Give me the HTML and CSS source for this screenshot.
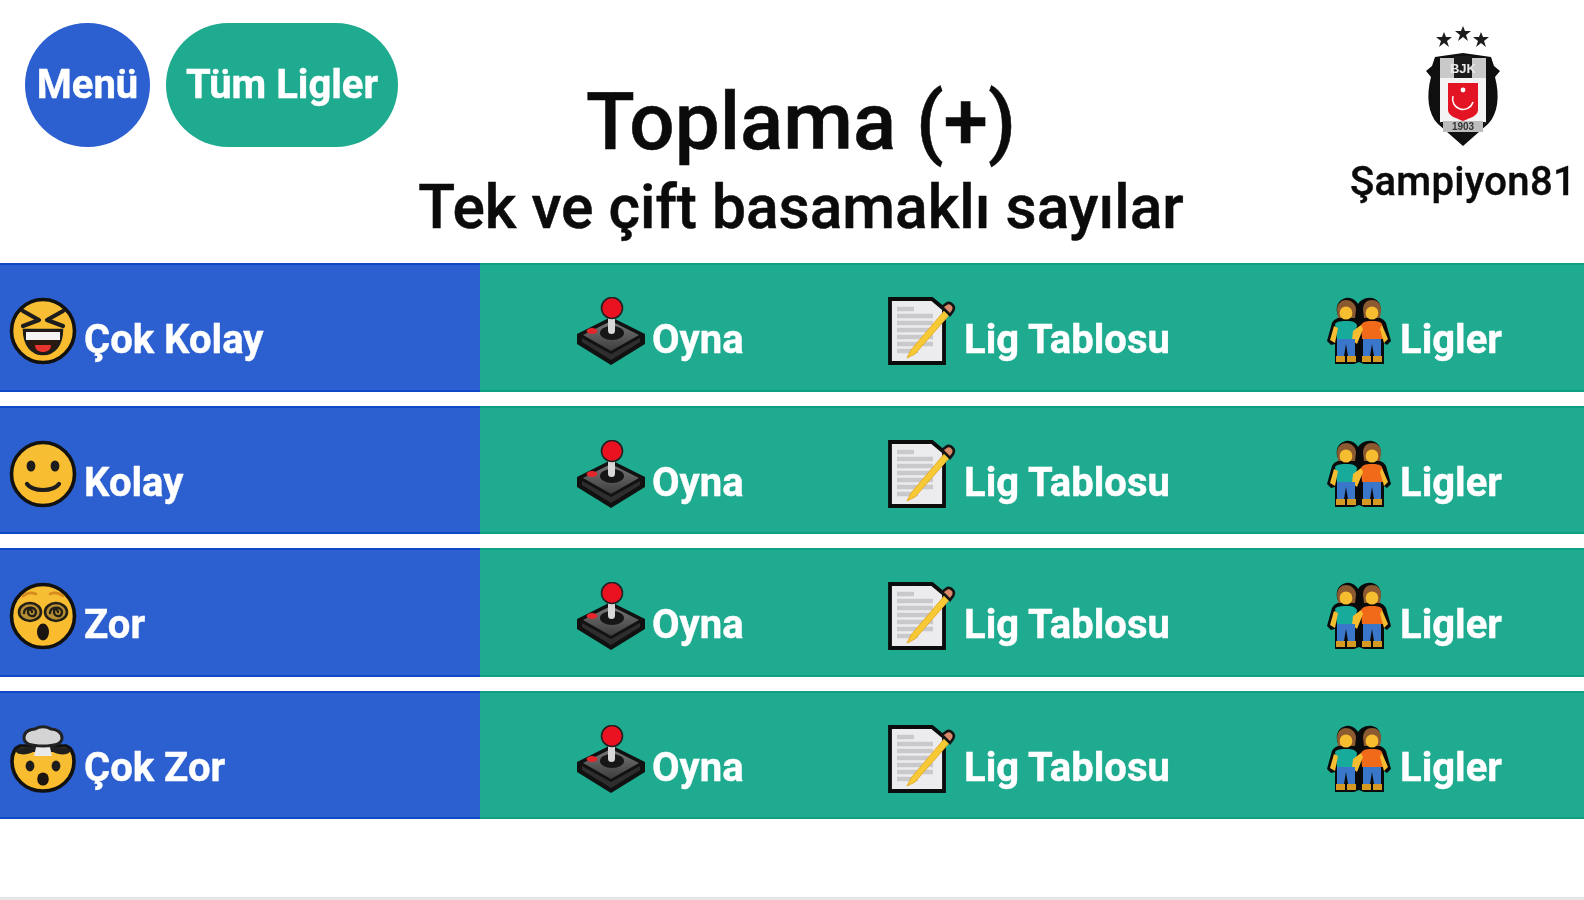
FILE: index.html
```html
<!DOCTYPE html>
<html lang="tr">
<head>
<meta charset="utf-8">
<title>Toplama (+)</title>
<link rel="stylesheet" href="styles.css">
</head>
<body>
<svg class="defs" aria-hidden="true">
  <defs>
    <linearGradient id="gface" x1="0" y1="0" x2="0" y2="1"><stop offset="0" stop-color="#f6bf36"/><stop offset="1" stop-color="#fbbb2c"/></linearGradient>
    <linearGradient id="gbase" x1="0" y1="0" x2="0" y2="1"><stop offset="0" stop-color="#777"/><stop offset="1" stop-color="#3d3d3d"/></linearGradient>
    <symbol id="i-laugh" viewBox="0 0 68 68">
      <circle cx="34" cy="34" r="31.5" fill="url(#gface)" stroke="#111" stroke-width="3.6"/>
      <path d="M14 14 30 23 14 29M54 14 38 23 54 29" fill="none" stroke="#1d1d1d" stroke-width="4.2" stroke-linecap="round" stroke-linejoin="round"/>
      <path d="M15 33H53C53 48 45 57 34 57S15 48 15 33Z" fill="#2a1a10" stroke="#1d1d1d" stroke-width="2.4"/>
      <path d="M17 35H51V43H17Z" fill="#f4f4f4"/>
      <path d="M26 48H42C42 53 38 55 34 55S26 53 26 48Z" fill="#e8352e"/>
    </symbol>
    <symbol id="i-smile" viewBox="0 0 68 68">
      <circle cx="34" cy="34" r="31.5" fill="url(#gface)" stroke="#111" stroke-width="3.6"/>
      <ellipse cx="22" cy="26" rx="4.4" ry="5.6" fill="#1d1d1d"/>
      <ellipse cx="46" cy="26" rx="4.4" ry="5.6" fill="#1d1d1d"/>
      <path d="M18 44C24 52 44 52 50 44" fill="none" stroke="#1d1d1d" stroke-width="4.2" stroke-linecap="round"/>
    </symbol>
    <symbol id="i-dizzy" viewBox="0 0 68 68">
      <circle cx="34" cy="34" r="31.5" fill="url(#gface)" stroke="#111" stroke-width="3.6"/>
      <path d="M14 14Q20 9 27 12M41 12Q48 9 54 14" fill="none" stroke="#d68b1e" stroke-width="2.6" stroke-linecap="round"/>
      <ellipse cx="21" cy="30" rx="11" ry="9" fill="#b58f34" stroke="#231f16" stroke-width="2.6"/>
      <ellipse cx="47" cy="30" rx="11" ry="9" fill="#b58f34" stroke="#231f16" stroke-width="2.6"/>
      <path d="M15 31C15 24 27 24 27 30S19 35 19 30 23 28 23 30M41 31C41 24 53 24 53 30S45 35 45 30 49 28 49 30" fill="none" stroke="#231f16" stroke-width="2.4" stroke-linecap="round"/>
      <ellipse cx="34" cy="50" rx="6" ry="8.4" fill="#1c1410"/>
    </symbol>
    <symbol id="i-blown" viewBox="0 0 68 68">
      <path d="M3 36C3 28 6 23 11 21H57C62 23 65 28 65 36C65 54 51 66 34 66S3 54 3 36Z" fill="url(#gface)" stroke="#111" stroke-width="3.6"/>
      <path d="M6 25C14 20 54 20 62 25 60 31 50 30 44 27H24C18 30 8 31 6 25Z" fill="#1f1f1f"/>
      <path d="M28 18H40L43 31H25Z" fill="#e9e9e9"/>
      <path d="M15 13C15 6 22 4 26 4 30 1 38 1 42 4 47 4 53 7 53 13 53 19 46 21 34 21S15 19 15 13Z" fill="#d4d4d4" stroke="#222" stroke-width="3"/>
      <ellipse cx="21" cy="41" rx="4.4" ry="5.4" fill="#1d1d1d"/>
      <ellipse cx="47" cy="41" rx="4.4" ry="5.4" fill="#1d1d1d"/>
      <ellipse cx="34" cy="54" rx="5.8" ry="6.6" fill="#1c1410"/>
    </symbol>
    <symbol id="i-joy" viewBox="0 0 68 68">
      <path d="M34 20 68 37V47L34 68 0 47V37Z" fill="#111"/>
      <path d="M34 24 62 38 34 54 6 38Z" fill="url(#gbase)"/>
      <path d="M5 41 34 57 63 41V45L34 63 5 45Z" fill="#2e2e2e"/>
      <ellipse cx="35" cy="36" rx="12" ry="7" fill="#161616"/>
      <ellipse cx="15" cy="34" rx="5.4" ry="3" fill="#e6262b"/>
      <rect x="31" y="17" width="7" height="20" rx="3.5" fill="#d8d8d8"/>
      <circle cx="35" cy="11" r="10.5" fill="#ea1220" stroke="#222" stroke-width="1.6"/>
    </symbol>
    <symbol id="i-memo" viewBox="0 0 70 68">
      <path d="M2 2H44L56 12V66H2Z" fill="#ececef" stroke="#0c0c0c" stroke-width="3.8"/>
      <path d="M9 12H26M9 19H45M9 26H45M9 33H45M9 40H45M9 47H45M9 54H30" stroke="#c9c9cc" stroke-width="4.4"/>
      <path d="M19 61 23 53 57 13 62 17 27 57Z" fill="#f7c935" stroke="#e6ac2c" stroke-width="1"/>
      <path d="M56 12 62 18 65 14C68 9 62 4 58 7L54 10Z" fill="#d98a6a" stroke="#141414" stroke-width="2.6"/>
    </symbol>
    <symbol id="i-people" viewBox="0 0 64 68">
      <path d="M0 44 5 26C7 22 10 22 12 20 8 14 9 3 19 1 26 0 30 5 31 7 33 4 38 0 45 1 55 3 55 14 52 20 54 22 57 22 59 26L64 44 60 48 57 46V67H37L32 65 27 67H8V47L4 48Z" fill="#0a0a0a"/>
      <path d="M10 13C10 6 15 3 19 3S29 6 29 13L28 21H11Z" fill="#8c5a30"/>
      <path d="M36 13C36 6 40 3 45 3S54 6 54 13L53 21H37Z" fill="#8c5a30"/>
      <ellipse cx="19" cy="16" rx="6.4" ry="6.6" fill="#f5bd2f"/>
      <ellipse cx="45" cy="16" rx="6.4" ry="6.6" fill="#f5bd2f"/>
      <path d="M8 27C10 24 15 24 19 24S28 24 30 28L28 42H10Z" fill="#16ab9a"/>
      <path d="M34 28C36 24 41 24 45 24S53 24 55 27L57 42H35Z" fill="#f06a1a"/>
      <path d="M3 43 7 29 11 31 8 46ZM26 34 34 28 36 32 30 47 25 43ZM55 28 61 42 57 46 53 32Z" fill="#f5bd2f"/>
      <path d="M10 42H28V59H21L19 47 17 59H10Z" fill="#3a76c9"/>
      <path d="M36 42H54V59H47L45 47 43 59H36Z" fill="#3a76c9"/>
      <path d="M9 59H18V65H9ZM20 59H29V65H20ZM35 59H44V65H35ZM46 59H55V65H46Z" fill="#d69a22"/>
    </symbol>
  </defs>
</svg>
<div class="page">
  <header class="top">
    <nav class="actions">
      <a class="pill pill-blue">Menü</a>
      <a class="pill pill-green">Tüm Ligler</a>
    </nav>
    <div class="heading">
      <h1>Toplama (+)</h1>
      <h2>Tek ve çift basamaklı sayılar</h2>
    </div>
    <div class="user">
      <svg class="crest" viewBox="0 0 74 120" aria-hidden="true">
        <path d="M18 6 20 11 26 11 21 15 23 21 18 17 13 21 15 15 10 11 16 11Z" fill="#1c1c1c"/>
        <path d="M37 0 39 5 45 5 40 9 42 15 37 11 32 15 34 9 29 5 35 5Z" fill="#1c1c1c"/>
        <path d="M55 6 57 11 63 11 58 15 60 21 55 17 50 21 52 15 47 11 53 11Z" fill="#1c1c1c"/>
        <path d="M9 31 37 27 65 31 68 40 74 45 69 51C74 70 72 88 62 98L37 120 12 98C2 88 0 70 5 51L0 45 6 40Z" fill="#0f0f0f"/>
        <path d="M14 32H60V96L37 114 14 96Z" fill="#f4f4f4"/>
        <path d="M14 32H60V52H14Z" fill="#c9c9c9"/>
        <path d="M28 30H46V52H28Z" fill="#1a1a1a"/>
        <text class="crest-text" x="37" y="47" text-anchor="middle">BJK</text>
        <path d="M22 57H52V84C52 90 44 92 37 95 30 92 22 90 22 84Z" fill="#e31524"/>
        <path d="M27 70A10 10 0 0 0 47 76 9 9 0 0 1 27 70Z" fill="#fff" stroke="#fff" stroke-width="1.5"/>
        <circle cx="37" cy="64" r="2.4" fill="#fff"/>
        <path d="M14 96H60L37 118Z" fill="#111"/>
        <rect x="17" y="95" width="40" height="11" fill="#bdbdbd"/>
        <text class="crest-text crest-year" x="37" y="104" text-anchor="middle">1903</text>
      </svg>
      <span class="user-name">Şampiyon81</span>
    </div>
  </header>

  <main class="rows">
    <section class="row">
      <div class="level"><svg class="ico ico-face"><use href="#i-laugh"/></svg><span>Çok Kolay</span></div>
      <div class="links">
        <a class="link link-play"><svg class="ico ico-joy"><use href="#i-joy"/></svg><span>Oyna</span></a>
        <a class="link link-table"><svg class="ico ico-memo"><use href="#i-memo"/></svg><span>Lig Tablosu</span></a>
        <a class="link link-leagues"><svg class="ico ico-people"><use href="#i-people"/></svg><span>Ligler</span></a>
      </div>
    </section>
    <section class="row">
      <div class="level"><svg class="ico ico-face"><use href="#i-smile"/></svg><span>Kolay</span></div>
      <div class="links">
        <a class="link link-play"><svg class="ico ico-joy"><use href="#i-joy"/></svg><span>Oyna</span></a>
        <a class="link link-table"><svg class="ico ico-memo"><use href="#i-memo"/></svg><span>Lig Tablosu</span></a>
        <a class="link link-leagues"><svg class="ico ico-people"><use href="#i-people"/></svg><span>Ligler</span></a>
      </div>
    </section>
    <section class="row">
      <div class="level"><svg class="ico ico-face"><use href="#i-dizzy"/></svg><span>Zor</span></div>
      <div class="links">
        <a class="link link-play"><svg class="ico ico-joy"><use href="#i-joy"/></svg><span>Oyna</span></a>
        <a class="link link-table"><svg class="ico ico-memo"><use href="#i-memo"/></svg><span>Lig Tablosu</span></a>
        <a class="link link-leagues"><svg class="ico ico-people"><use href="#i-people"/></svg><span>Ligler</span></a>
      </div>
    </section>
    <section class="row">
      <div class="level"><svg class="ico ico-face"><use href="#i-blown"/></svg><span>Çok Zor</span></div>
      <div class="links">
        <a class="link link-play"><svg class="ico ico-joy"><use href="#i-joy"/></svg><span>Oyna</span></a>
        <a class="link link-table"><svg class="ico ico-memo"><use href="#i-memo"/></svg><span>Lig Tablosu</span></a>
        <a class="link link-leagues"><svg class="ico ico-people"><use href="#i-people"/></svg><span>Ligler</span></a>
      </div>
    </section>
  </main>
  <footer class="foot"></footer>
</div>
</body>
</html>
```
FILE: styles.css
```css
* { box-sizing: border-box; }
html, body { margin: 0; padding: 0; background: #fff; overflow: hidden; }
body { font-family: Roboto, "Liberation Sans", sans-serif; color: #0b0b0b; }
.defs { width: 0; height: 0; display: block; }
.page { height: 900px; display: flex; flex-direction: column; filter: blur(0.6px); }

.top { height: 263px; display: grid; grid-template-columns: 400px 802px 1fr; flex: none; }
.actions { display: flex; gap: 16px; padding: 23px 0 0 25px; align-items: flex-start; }
.pill { height: 124px; border-radius: 62px; display: flex; align-items: center; justify-content: center; padding-bottom: 2px; color: #fff; font-weight: 700; font-size: 40px; -webkit-text-stroke: 0.4px #fff; }
.pill-blue { width: 125px; background: #2c5fcf; }
.pill-green { width: 232px; background: #1fab90; }

.heading { text-align: center; padding-top: 78px; -webkit-text-stroke: 0.5px #0b0b0b; }
.heading h1 { margin: 0; font-size: 80px; line-height: 88px; font-weight: 500; }
.heading h2 { margin: 9px 0 0; font-size: 60.5px; line-height: 66px; font-weight: 500; }

.user { display: flex; flex-direction: column; align-items: flex-end; padding: 26px 8px 0 0; }
.crest { width: 74px; height: 120px; display: block; margin-right: 76px; }
.crest-text { font-family: "Liberation Sans", sans-serif; font-weight: 700; font-size: 13px; fill: #e8e8e8; }
.crest-year { font-size: 10px; fill: #333; }
.user-name { font-size: 40px; line-height: 44px; font-weight: 500; letter-spacing: 0.3px; margin-top: 14px; -webkit-text-stroke: 0.4px #0b0b0b; }

.rows { display: flex; flex-direction: column; gap: 14px; flex: none; }
.row { height: 128.5px; display: flex; color: #fff; font-weight: 700; font-size: 40px; }
.row span { line-height: 44px; -webkit-text-stroke: 0.4px #fff; }
.level { width: 480px; flex: none; display: flex; align-items: flex-start; gap: 7px; padding: 32px 0 0 9px; background: #2c5fcf; border-block: 2px solid #0f48c6; }
.links { flex: 1; display: flex; background: #1fab90; border-block: 2px solid #0fa083; }
.link { width: 368px; flex: none; display: flex; align-items: flex-start; gap: 7px; padding-top: 32px; }
.link-play { padding-left: 97px; }
.link-table { padding-left: 40px; gap: 6px; }
.link-leagues { padding-left: 111px; gap: 9px; }
.level span, .link span { margin-top: 21px; }
.ico { display: block; flex: none; height: 68px; }
.ico-face { width: 68px; }
.ico-joy { width: 68px; }
.ico-memo { width: 70px; }
.ico-people { width: 64px; }

.foot { margin-top: auto; height: 3px; background: #e6e6e6; flex: none; }
```
